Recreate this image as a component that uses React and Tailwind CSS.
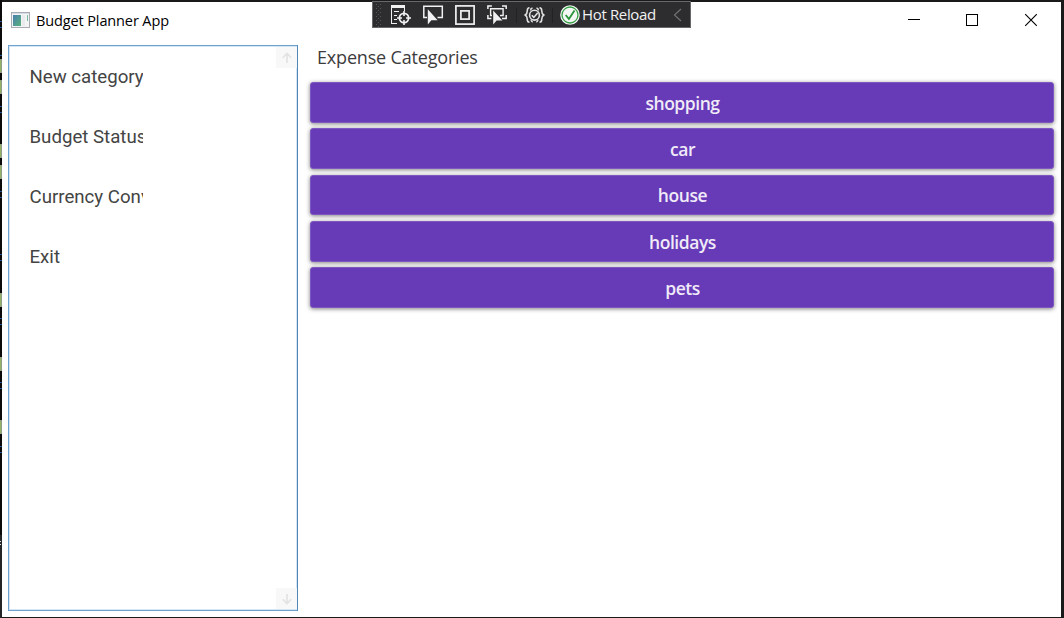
import React from "react";

const categories = ["shopping", "car", "house", "holidays", "pets"];
const menu = ["New category", "Budget Status", "Currency Converter", "Exit"];

function EditorEdge() {
  const green = [[59, 14], [80, 14], [144, 14], [165, 14], [293, 14], [357, 14], [420, 14]];
  const blue = [21, 27, 55, 106, 112, 191, 197, 254, 260, 318, 324, 382, 388, 446, 452];
  return (
    <svg className="block h-[618px] w-[2px] shrink-0" viewBox="0 0 2 618" shapeRendering="crispEdges">
      <rect width="2" height="618" fill="#0b0b0c" />
      {green.map(([y, h]) => (
        <g key={y}>
          <rect y={y} width="2" height={h} fill="#8f9a89" />
          <rect y={y + 1} width="1" height={h - 2} fill="#93b563" />
        </g>
      ))}
      {blue.map((y) => (
        <rect key={y} y={y} width="2" height="1" fill="#1d4f91" />
      ))}
      <rect y="535" width="2" height="83" fill="#242527" />
      <rect y="541" width="1" height="1" fill="#ddd" />
      <rect y="544" width="1" height="1" fill="#ddd" />
    </svg>
  );
}

function DebugToolbar() {
  return (
    <div className="absolute left-[372px] top-px flex h-[27px] w-[319px] items-center border border-[#68686b] bg-[#2d2d30]">
      <svg className="block h-[25px] w-[186px] shrink-0" viewBox="373 2 186 25" fill="none">
        <g fill="#55555a" shapeRendering="crispEdges">
          {[4, 8, 12, 16, 20, 24].map((y) => (
            <g key={y}>
              <rect x="376" y={y} width="1" height="1" />
              <rect x="380" y={y} width="1" height="1" />
              <rect x="378" y={y + 2} width="1" height="1" />
            </g>
          ))}
        </g>
        <g stroke="#f1f1f1">
          <path d="M391 6.5h14" strokeWidth="3" />
          <path d="M391.5 8v15.5M391 23.5h6M394 11.5h5M394 15.5h3M394 19.5h3M404.5 8v3" />
          <circle cx="404" cy="18" r="4.6" strokeWidth="1.8" />
          <path d="M404 11v5M404 20v5M397 18h5M406 18h5" strokeWidth="1.6" />
          <path d="M427 17.5h-3.2V6.2h18.5v11.3H437.5" strokeWidth="1.5" />
          <rect x="455.9" y="5.9" width="18.2" height="18.2" strokeWidth="1.7" />
          <rect x="460.9" y="10.9" width="8.2" height="8.2" strokeWidth="1.7" />
          <path d="M487.9 9V5.9h4M502 5.9h4.2V9M487.9 15v3.4h3.5M502 18.4h4.2V15" strokeWidth="1.5" />
          <path d="M492 15.5h-1.4V8.7h12.5v6.8H500" strokeWidth="1.4" />
        </g>
        <g fill="#f1f1f1">
          <path d="M427.8 9.3v15.2l3.6-4.2h6.2z" />
          <path d="M493.2 10.6v14l3.4-4h5.8z" />
        </g>
        <g stroke="#e2e2e2" strokeWidth="1.6">
          <path d="M529.5 7.8c-1.8 0-2.2 1.1-2.2 2.8 0 2-.4 3.4-2 4.4 1.6 1 2 2.4 2 4.4 0 1.7.4 2.8 2.2 2.8M539.5 7.8c1.8 0 2.2 1.1 2.2 2.8 0 2 .4 3.4 2 4.4-1.6 1-2 2.4-2 4.4 0 1.7-.4 2.8-2.2 2.8" />
          <path d="M532.5 8c-1.5.4-2 1.2-2 2.4M536.5 8c1.5.4 2 1.2 2 2.4M531 20c.2 1.2.8 1.8 1.8 2M538 20c-.2 1.2-.8 1.8-1.8 2" strokeWidth="1.4" />
          <circle cx="534.5" cy="15.2" r="4.9" />
          <path d="m531.8 15.2 2 2.2 4-4.6" />
        </g>
        <path d="M516.5 8v15M552.5 8v15" stroke="#222225" />
      </svg>
      <svg className="block h-[22px] w-[22px] shrink-0" viewBox="0 0 22 22" fill="none">
        <circle cx="11" cy="11" r="9.8" fill="#f4f8f4" />
        <circle cx="11" cy="11" r="8" stroke="#35a046" strokeWidth="1.3" />
        <path d="m6.7 11 3.2 4 5.6-8.4" stroke="#279238" strokeWidth="1.8" />
      </svg>
      <span className="-mt-px ml-px w-[86px] whitespace-nowrap font-['Open_Sans',sans-serif] text-[15px] leading-5 tracking-[-0.35px] text-[#f1f1f1]">Hot Reload</span>
      <svg className="ml-[5px] block h-[14px] w-[9px] shrink-0" viewBox="0 0 9 14" fill="none" stroke="#707073" strokeWidth="1.2">
        <path d="M8 1 1.5 7 8 13" />
      </svg>
    </div>
  );
}

function TitleBar() {
  return (
    <header className="flex h-[43px] shrink-0 items-start">
      <svg className="ml-[9px] mt-[10px] block h-[16px] w-[19px]" viewBox="0 0 19 16">
        <defs>
          <linearGradient id="pane" x1="0" y1="0" x2="1" y2="1">
            <stop offset="0" stopColor="#4a7fae" />
            <stop offset="1" stopColor="#59b27c" />
          </linearGradient>
        </defs>
        <rect x=".5" y=".5" width="18" height="15" fill="#f2f4f5" stroke="#a9acb2" />
        <rect x="1" y="1" width="17" height="1" fill="#d8dce2" />
        <rect x="2" y="3" width="8" height="11" fill="url(#pane)" />
        <rect x="11" y="3" width="3" height="11" fill="#e9ebed" />
        <rect x="16" y="3" width="1" height="6" fill="#79b99d" />
      </svg>
      <h1 className="ml-[6px] mt-[9px] whitespace-nowrap font-['Open_Sans',sans-serif] text-[14.5px] leading-5 tracking-[-0.12px] text-black">Budget Planner App</h1>
      <svg className="ml-auto mr-[24px] mt-[11px] block h-[14px] w-[130px]" viewBox="907 13 130 14" fill="none" stroke="#000">
        <path d="M908 19.5h12M966.5 14.5h11v11h-11z" shapeRendering="crispEdges" />
        <path d="m1025.2 14.2 11.6 11.6M1036.8 14.2l-11.6 11.6" strokeWidth="1.1" />
      </svg>
    </header>
  );
}

function ScrollArrow({ down }) {
  return (
    <div className="flex h-[21px] w-[21px] items-center justify-center bg-[#f8f8f8]">
      <svg className={down ? "block h-3 w-3 rotate-180" : "block h-3 w-3"} viewBox="0 0 12 12" fill="none" stroke="#e2e2e2" strokeWidth="1.6">
        <path d="M6 11V1.5M1.8 5.7 6 1.5l4.2 4.2" />
      </svg>
    </div>
  );
}

export default function App() {
  return (
    <div className="relative flex h-[618px] w-[1064px] overflow-hidden bg-[#1a1a1b]">
      <EditorEdge />
      <div className="mt-[2px] flex h-[615px] w-[1059px] flex-col bg-white">
        <TitleBar />
        <main className="flex min-h-0 flex-1">
          <aside className="ml-[6px] flex h-[566px] w-[290px] justify-between border border-[#6ca2cf] border-r-[#5087b8] shadow-[inset_0_0_0_1px_#d5e5f3]">
            <nav className="ml-[20.5px] mt-px w-[113.5px] overflow-hidden">
              {menu.map((label) => (
                <div key={label} className="flex h-[60px] items-center whitespace-nowrap font-['Roboto',sans-serif] text-[18.67px] leading-6 text-[#444444]">
                  {label}
                </div>
              ))}
            </nav>
            <div className="flex flex-col justify-between py-px">
              <ScrollArrow />
              <ScrollArrow down />
            </div>
          </aside>
          <section className="ml-[12px] w-[744px]">
            <h2 className="ml-[7px] h-[37px] whitespace-nowrap font-['Open_Sans',sans-serif] text-[18px] leading-[25px] tracking-[-0.18px] text-[#3c3c3c]">Expense Categories</h2>
            <div className="flex flex-col gap-[5.6px]">
              {categories.map((name) => (
                <button
                  key={name}
                  className="flex h-[40.7px] items-center justify-center rounded-[3px] border border-[#7e58c0] bg-[#673ab7] pl-px pt-px font-['Open_Sans',sans-serif] text-[17.5px] leading-6 font-semibold tracking-[-0.45px] text-[#f0ebf8] shadow-[0_1px_4px_rgba(0,0,0,0.5)]"
                >
                  {name}
                </button>
              ))}
            </div>
          </section>
        </main>
      </div>
      <DebugToolbar />
    </div>
  );
}
